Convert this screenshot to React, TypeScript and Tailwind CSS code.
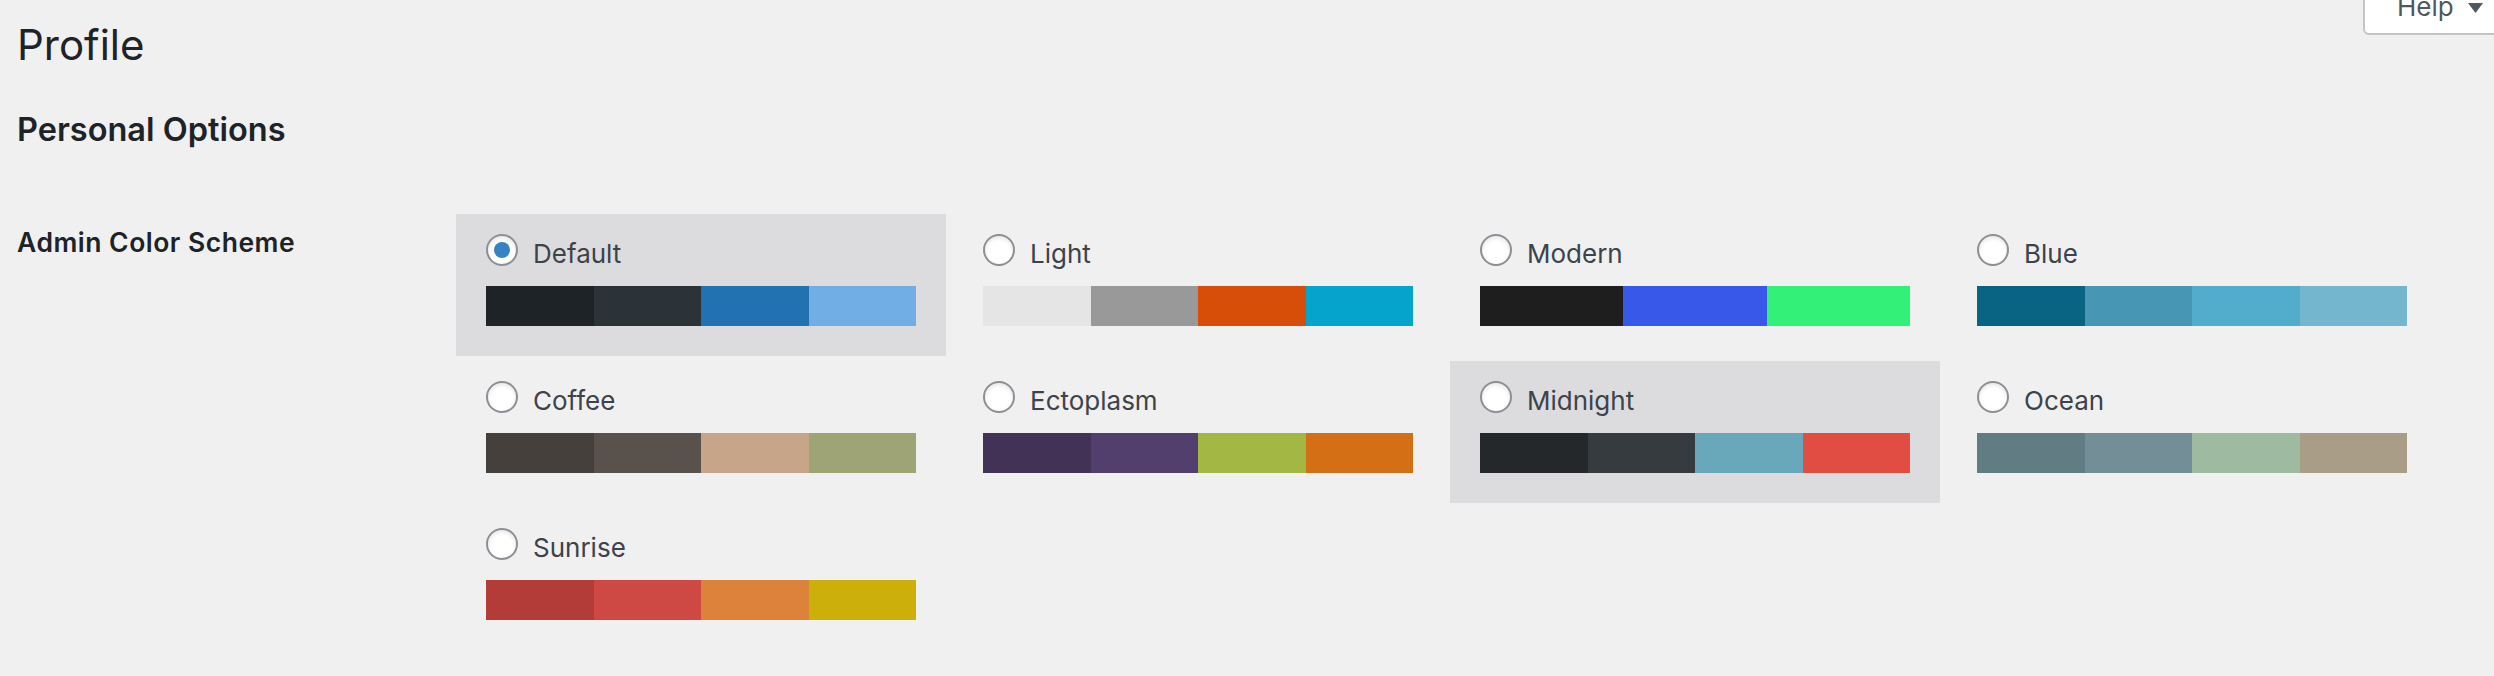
const schemes: { name: string; colors: string[]; selected?: boolean; checked?: boolean }[] = [
  { name: "Default", colors: ["#1d2327", "#2c3338", "#2271b1", "#72aee6"], selected: true, checked: true },
  { name: "Light", colors: ["#e5e5e5", "#999999", "#d64e07", "#04a4cc"] },
  { name: "Modern", colors: ["#1e1e1e", "#3858e9", "#33f078"] },
  { name: "Blue", colors: ["#096484", "#4796b3", "#52accc", "#74b6ce"] },
  { name: "Coffee", colors: ["#46403c", "#59524c", "#c7a589", "#9ea476"] },
  { name: "Ectoplasm", colors: ["#413256", "#523f6d", "#a3b745", "#d46f15"] },
  { name: "Midnight", colors: ["#25282b", "#363b3f", "#69a8bb", "#e14d43"], selected: true },
  { name: "Ocean", colors: ["#627c83", "#738e96", "#9ebaa0", "#aa9d88"] },
  { name: "Sunrise", colors: ["#b43c38", "#cf4944", "#dd823b", "#ccaf0b"] },
];

function Radio({ checked }: { checked?: boolean }) {
  return (
    <span className="flex h-[32px] w-[32px] shrink-0 items-center justify-center rounded-full border-2 border-[#8c8f94] bg-white shadow-[inset_0_2px_4px_rgba(0,0,0,0.1)]">
      {checked && <span className="h-[16px] w-[16px] rounded-full bg-[#3582c4]" />}
    </span>
  );
}

function ColorOption({ name, colors, selected, checked }: (typeof schemes)[number]) {
  return (
    <div className={`px-[30px] pt-[20px] pb-[30px] ${selected ? "bg-[#dcdcde]" : ""}`}>
      <label className="flex h-[32px] items-start gap-[15px]">
        <Radio checked={checked} />
        <span className="pt-[7px] text-[26px] leading-none text-[#3c434a]">{name}</span>
      </label>
      <div className="mt-[20px] flex h-[40px]">
        {colors.map((c) => (
          <div key={c} className="flex-1" style={{ backgroundColor: c }} />
        ))}
      </div>
    </div>
  );
}

export default function App() {
  return (
    <div className="relative min-h-screen overflow-hidden bg-[#f0f0f1] font-['Inter','Liberation_Sans',sans-serif] text-[#1d2327]">
      {/* help tab, cut off by the top edge */}
      <div className="absolute right-[-20px] top-[-10px] flex h-[45px] w-[151px] items-start gap-[14px] rounded-b-[6px] border-2 border-[#c3c4c7] bg-white pl-[32px] pt-[2px] text-[#50575e]">
        <span className="text-[26px] leading-none">Help</span>
        <svg width="15" height="10" viewBox="0 0 15 10" className="mt-[9px]">
          <path d="M0 0 L15 0 L7.5 10 Z" fill="#50575e" />
        </svg>
      </div>

      <div className="pl-[17px]">
        <h1 className="pt-[24px] text-[42px] font-normal leading-none">Profile</h1>
        <h2 className="mt-[48px] text-[32.5px] font-semibold leading-none">Personal Options</h2>

        <div className="mt-[67px] flex">
          <div className="w-[439px] shrink-0 pt-[15px] text-[26.5px] font-semibold leading-none tracking-[0.5px]">
            Admin Color Scheme
          </div>
          <div className="grid grid-cols-[repeat(4,490px)] gap-x-[7px] gap-y-[5px]">
            {schemes.map((s) => (
              <ColorOption key={s.name} {...s} />
            ))}
          </div>
        </div>
      </div>
    </div>
  );
}
